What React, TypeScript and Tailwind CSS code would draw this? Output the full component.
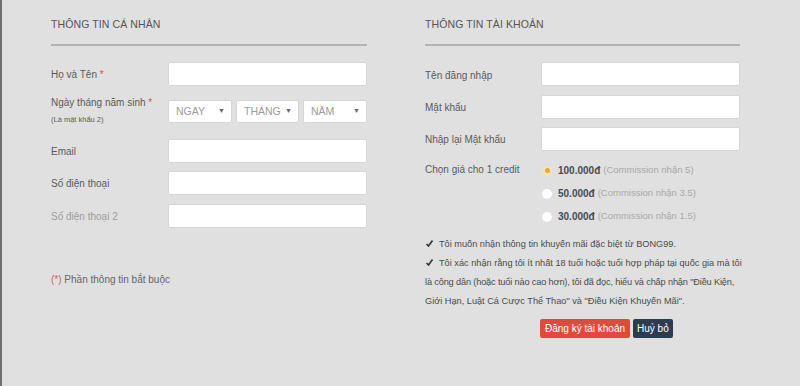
import React from 'react';

const font = { fontFamily: '"Liberation Sans", Arial, sans-serif' };

function TextInput() {
  return <div className="h-[24px] flex-1 bg-white border border-[#d6d6d6] rounded-[2px]" />;
}

function Select({ label, width }: { label: string; width: string }) {
  return (
    <div
      className={`${width} h-[23px] bg-white border border-[#d6d6d6] rounded-[2px] flex items-center justify-between pl-[7px] pr-[6px] text-[10.5px] text-[#9a9a9a]`}
    >
      <span>{label}</span>
      <span className="text-[7px] text-[#666]">▼</span>
    </div>
  );
}

function Row({
  label,
  className = '',
  labelClass = 'text-[#5a5a5a]',
}: {
  label: React.ReactNode;
  className?: string;
  labelClass?: string;
}) {
  return (
    <div className={`flex items-center ${className}`}>
      <div className={`w-[117px] shrink-0 text-[10px] ${labelClass}`}>{label}</div>
      <TextInput />
    </div>
  );
}

function Heading({ children }: { children: React.ReactNode }) {
  return (
    <>
      <div className="text-[10.5px] leading-[14px] text-[#555] tracking-[0.1px]">{children}</div>
      <div className="mt-[13px] h-[2px] bg-[#b4b4b4]" />
    </>
  );
}

function Radio({
  checked,
  price,
  note,
}: {
  checked?: boolean;
  price: string;
  note: string;
}) {
  return (
    <div className="h-[23px] flex items-center">
      {checked ? (
        <span className="w-[10px] h-[10px] rounded-full bg-[#f6e3b8] flex items-center justify-center ml-[1px]">
          <span className="w-[5px] h-[5px] rounded-full bg-[#e9a73a]" />
        </span>
      ) : (
        <span className="w-[10px] h-[10px] rounded-full bg-white ml-[1px]" />
      )}
      <span className="ml-[6px] text-[10px] font-bold text-[#4a4a4a]">{price}</span>
      <span className="ml-[3px] text-[9.5px] text-[#a8a8a8]">{note}</span>
    </div>
  );
}

function Check() {
  return (
    <span className="inline-block align-[-1px] w-[9px] h-[9px] mr-[5px] relative">
      <svg width="9" height="9" viewBox="0 0 9 9" className="absolute left-0 top-0">
        <path d="M1.5 5 L3.5 7 L7.5 1.5" stroke="#333" strokeWidth="1.6" fill="none" />
      </svg>
    </span>
  );
}

export default function App() {
  return (
    <div
      className="w-[800px] h-[386px] bg-[#e0e0e0] border-l-[2px] border-[#6e6e6e] flex pl-[49px] pt-[17px] overflow-hidden"
      style={font}
    >
      {/* Personal info */}
      <div className="w-[316px] flex flex-col">
        <Heading>THÔNG TIN CÁ NHÂN</Heading>
        <Row
          className="mt-[16px]"
          label={
            <>
              Họ và Tên <span className="text-[#d9534f]">*</span>
            </>
          }
        />
        <div className="mt-[14px] h-[30px] flex items-start">
          <div className="w-[117px] shrink-0 -mt-[4px]">
            <div className="text-[10px] leading-[14px] text-[#5a5a5a]">
              Ngày tháng năm sinh <span className="text-[#d9534f]">*</span>
            </div>
            <div className="mt-[5px] text-[7.5px] leading-[10px] text-[#5a5a5a]">(Là mật khẩu 2)</div>
          </div>
          <div className="flex-1 flex gap-[4px]">
            <Select label="NGAY" width="w-[64px]" />
            <Select label="THÁNG" width="w-[63px]" />
            <Select label="NĂM" width="w-[64px]" />
          </div>
        </div>
        <Row className="mt-[9px]" label="Email" />
        <Row className="mt-[8px]" label="Số điện thoại" />
        <Row className="mt-[9px]" label="Số điện thoại 2" labelClass="text-[#9c9c9c]" />
        <div className="mt-[45px] text-[10px] leading-[14px] text-[#666]">
          <span className="text-[#c9605c]">(*)</span> Phần thông tin bắt buộc
        </div>
      </div>

      {/* Account info */}
      <div className="ml-[58px] w-[315px] flex flex-col">
        <Heading>THÔNG TIN TÀI KHOẢN</Heading>
        <div className="mt-[16px] flex items-center">
          <div className="w-[116px] shrink-0 text-[10px] text-[#5a5a5a] pt-[3px]">Tên đăng nhập</div>
          <TextInput />
        </div>
        <div className="mt-[9px] flex items-center">
          <div className="w-[116px] shrink-0 text-[10px] text-[#5a5a5a]">Mật khẩu</div>
          <TextInput />
        </div>
        <div className="mt-[8px] flex items-center">
          <div className="w-[116px] shrink-0 text-[10px] text-[#5a5a5a]">Nhập lại Mật khẩu</div>
          <TextInput />
        </div>
        <div className="mt-[8px] flex items-start">
          <div className="w-[116px] shrink-0 text-[10px] leading-[23px] text-[#5a5a5a] -mt-[1px]">
            Chọn giá cho 1 credit
          </div>
          <div className="flex flex-col">
            <Radio checked price="100.000đ" note="(Commission nhận 5)" />
            <Radio price="50.000đ" note="(Commission nhận 3.5)" />
            <Radio price="30.000đ" note="(Commission nhận 1.5)" />
          </div>
        </div>
        <div className="mt-[7px] text-[9.2px] leading-[19px] text-[#4a4a4a] whitespace-nowrap">
          <div>
            <Check />
            Tôi muốn nhận thông tin khuyến mãi đặc biệt từ BONG99.
          </div>
          <div>
            <Check />
            Tôi xác nhận rằng tôi ít nhất 18 tuổi hoặc tuổi hợp pháp tại quốc gia mà tôi
            <br />
            <span className="tracking-[-0.15px]">
              là công dân (hoặc tuổi nào cao hơn), tôi đã đọc, hiểu và chấp nhận "Điều Kiện,
            </span>
            <br />
            Giới Hạn, Luật Cá Cược Thể Thao" và "Điều Kiện Khuyến Mãi".
          </div>
        </div>
        <div className="mt-[8px] pl-[115px] flex gap-[3px]">
          <button className="h-[19px] px-[5px] rounded-[2px] bg-[#e2493c] text-white text-[10px] leading-[19px]">
            Đăng ký tài khoản
          </button>
          <button className="h-[19px] px-[4px] rounded-[2px] bg-[#2c3b4f] text-white text-[10px] leading-[19px]">
            Huỷ bỏ
          </button>
        </div>
      </div>
    </div>
  );
}
